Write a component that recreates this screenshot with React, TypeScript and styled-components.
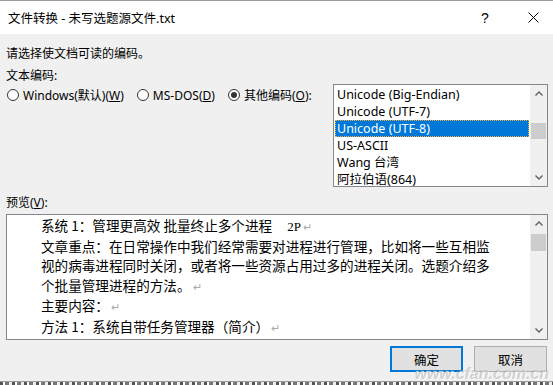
import styled, { createGlobalStyle } from "styled-components";

const GlobalStyle = createGlobalStyle`
  html, body {
    margin: 0;
    padding: 0;
  }
  body {
    background: #f0f0f0;
    font-family: "Noto Sans", "Noto Sans CJK SC", sans-serif;
    color: #000;
  }
`;

const Window = styled.div`
  width: 553px;
  height: 385px;
  display: flex;
  flex-direction: column;
  overflow: hidden;
  position: relative;
  background: #f0f0f0;
`;

const TitleBar = styled.div`
  height: 33px;
  border-top: 1px solid #9b9b9b;
  background: #fff;
  display: flex;
  align-items: center;
  padding-left: 8px;
  font-size: 12.5px;
`;

const Controls = styled.div`
  margin-left: auto;
  display: flex;
  gap: 8px;
`;

const CaptionButton = styled.div`
  width: 40px;
  height: 33px;
  display: flex;
  align-items: center;
  justify-content: center;
  font-size: 14px;
  font-family: "Liberation Sans", sans-serif;
`;

const Body = styled.div`
  flex: 1;
  display: flex;
  flex-direction: column;
  padding: 0 5px 0 6px;
  font-size: 12px;
`;

const Line = styled.div<{ $top: number }>`
  margin-top: ${(p) => p.$top}px;
  line-height: 16px;
  height: 16px;
  white-space: nowrap;
`;

const Key = styled.span`
  text-decoration: underline;
`;

const EncodingRow = styled.div`
  display: flex;
  align-items: flex-start;
`;

const RadioGroup = styled.div`
  display: flex;
  align-items: center;
  margin-top: 3px;
  height: 16px;
`;

const RadioItem = styled.label`
  display: flex;
  align-items: center;
  gap: 4px;
  margin-right: 12px;
  white-space: nowrap;
`;

const RadioCircle = styled.span<{ $checked?: boolean }>`
  width: 10px;
  height: 10px;
  margin-left: 1px;
  border: 1px solid #333;
  border-radius: 50%;
  background: #fff;
  display: flex;
  align-items: center;
  justify-content: center;
  &::after {
    content: "";
    width: 6px;
    height: 6px;
    border-radius: 50%;
    background: ${(p) => (p.$checked ? "#333" : "transparent")};
  }
`;

const ListBox = styled.div`
  margin-left: auto;
  width: 213px;
  height: 101px;
  border: 1px solid #828790;
  background: #fff;
  display: flex;
  overflow: hidden;
`;

const List = styled.div`
  flex: 1;
  padding: 1px 1px 0 1px;
  overflow: hidden;
`;

const ListItem = styled.div<{ $selected?: boolean }>`
  height: 17px;
  line-height: 17px;
  padding-left: 2px;
  white-space: nowrap;
  font-size: 12.5px;
  box-sizing: border-box;
  background: ${(p) => (p.$selected ? "#0078d7" : "transparent")};
  color: ${(p) => (p.$selected ? "#fff" : "#000")};
  outline: ${(p) => (p.$selected ? "1px dotted #f5b04a" : "none")};
  outline-offset: -1px;
`;

const ScrollBar = styled.div`
  width: 17px;
  background: #f0f0f0;
  display: flex;
  flex-direction: column;
`;

const Arrow = styled.div`
  height: 17px;
  display: flex;
  align-items: center;
  justify-content: center;
`;

const Thumb = styled.div<{ $offset: number; $size: number }>`
  margin: ${(p) => p.$offset}px 1px 0 1px;
  height: ${(p) => p.$size}px;
  background: #cdcdcd;
`;

const Track = styled.div`
  flex: 1;
`;

const PreviewBox = styled.div`
  margin-top: 3px;
  height: 124px;
  border: 1px solid #828790;
  background: #fff;
  display: flex;
`;

const PreviewText = styled.div`
  flex: 1;
  padding: 1px 0 0 34px;
  font-family: "Noto Sans CJK SC", sans-serif;
  font-size: 13.6px;
  line-height: 19.5px;
  overflow: hidden;
  white-space: nowrap;
`;

const Mark = styled.span`
  color: #a8a8a8;
  font-size: 11px;
  margin-left: 2px;
`;

const Page = styled.span`
  font-family: "Liberation Serif", serif;
  font-size: 13px;
  margin-left: 15px;
`;

const ButtonRow = styled.div`
  margin-top: 6px;
  display: flex;
  justify-content: flex-end;
  gap: 11px;
  padding-right: 1px;
`;

const Button = styled.div<{ $default?: boolean }>`
  width: 73px;
  height: 26px;
  box-sizing: border-box;
  background: #e1e1e1;
  border: ${(p) => (p.$default ? "2px solid #0078d7" : "1px solid #adadad")};
  display: flex;
  align-items: center;
  justify-content: center;
  font-size: 12.5px;
`;

const BottomStrip = styled.div`
  height: 3px;
  border-top: 1px solid #9a9a9a;
  background: repeating-linear-gradient(
    90deg,
    #555 0 3px,
    #fff 3px 5px,
    #777 5px 9px,
    #eee 9px 12px
  );
`;

const Watermark = styled.span`
  position: absolute;
  right: 4px;
  bottom: 2px;
  font-family: "Liberation Sans", sans-serif;
  font-style: italic;
  font-weight: bold;
  font-size: 16px;
  color: rgba(150, 150, 150, 0.4);
  text-shadow: 1px 1px 0 rgba(255, 255, 255, 0.8);
  pointer-events: none;
`;

function Chevron({ up }: { up?: boolean }) {
  return (
    <svg width="8" height="5" viewBox="0 0 8 5">
      <polyline
        points={up ? "0.5,4.5 4,1 7.5,4.5" : "0.5,0.5 4,4 7.5,0.5"}
        fill="none"
        stroke="#606060"
        strokeWidth="1.4"
      />
    </svg>
  );
}

function Scroller({ offset, size }: { offset: number; size: number }) {
  return (
    <ScrollBar>
      <Arrow>
        <Chevron up />
      </Arrow>
      <Thumb $offset={offset} $size={size} />
      <Track />
      <Arrow>
        <Chevron />
      </Arrow>
    </ScrollBar>
  );
}

const encodings = [
  "Unicode (Big-Endian)",
  "Unicode (UTF-7)",
  "Unicode (UTF-8)",
  "US-ASCII",
  "Wang 台湾",
  "阿拉伯语(864)",
];

export default function App() {
  return (
    <>
      <GlobalStyle />
      <Window>
        <TitleBar>
          <span>文件转换 - 未写选题源文件.txt</span>
          <Controls>
            <CaptionButton>?</CaptionButton>
            <CaptionButton>
              <svg width="11" height="11" viewBox="0 0 11 11">
                <path d="M0.5 0.5 L10.5 10.5 M10.5 0.5 L0.5 10.5" stroke="#000" strokeWidth="1" />
              </svg>
            </CaptionButton>
          </Controls>
        </TitleBar>
        <Body>
          <Line $top={12}>请选择使文档可读的编码。</Line>
          <Line $top={6}>文本编码:</Line>
          <EncodingRow>
            <RadioGroup>
              <RadioItem>
                <RadioCircle />
                <span>
                  Windows(默认)(<Key>W</Key>)
                </span>
              </RadioItem>
              <RadioItem>
                <RadioCircle />
                <span>
                  MS-DOS(<Key>D</Key>)
                </span>
              </RadioItem>
              <RadioItem>
                <RadioCircle $checked />
                <span>
                  其他编码(<Key>O</Key>):
                </span>
              </RadioItem>
            </RadioGroup>
            <ListBox>
              <List>
                {encodings.map((e, i) => (
                  <ListItem key={e} $selected={i === 2}>
                    {e}
                  </ListItem>
                ))}
              </List>
              <Scroller offset={21} size={16} />
            </ListBox>
          </EncodingRow>
          <Line $top={8}>
            预览(<Key>V</Key>):
          </Line>
          <PreviewBox>
            <PreviewText>
              <div>
                系统 1：管理更高效 批量终止多个进程<Page>2P</Page>
                <Mark>↵</Mark>
              </div>
              <div>文章重点：在日常操作中我们经常需要对进程进行管理，比如将一些互相监</div>
              <div>视的病毒进程同时关闭，或者将一些资源占用过多的进程关闭。选题介绍多</div>
              <div>
                个批量管理进程的方法。<Mark>↵</Mark>
              </div>
              <div>
                主要内容：<Mark>↵</Mark>
              </div>
              <div>
                方法 1：系统自带任务管理器（简介）<Mark>↵</Mark>
              </div>
            </PreviewText>
            <Scroller offset={2} size={17} />
          </PreviewBox>
          <ButtonRow>
            <Button $default>确定</Button>
            <Button>取消</Button>
          </ButtonRow>
        </Body>
        <BottomStrip />
        <Watermark>www.cfan.com.cn</Watermark>
      </Window>
    </>
  );
}
